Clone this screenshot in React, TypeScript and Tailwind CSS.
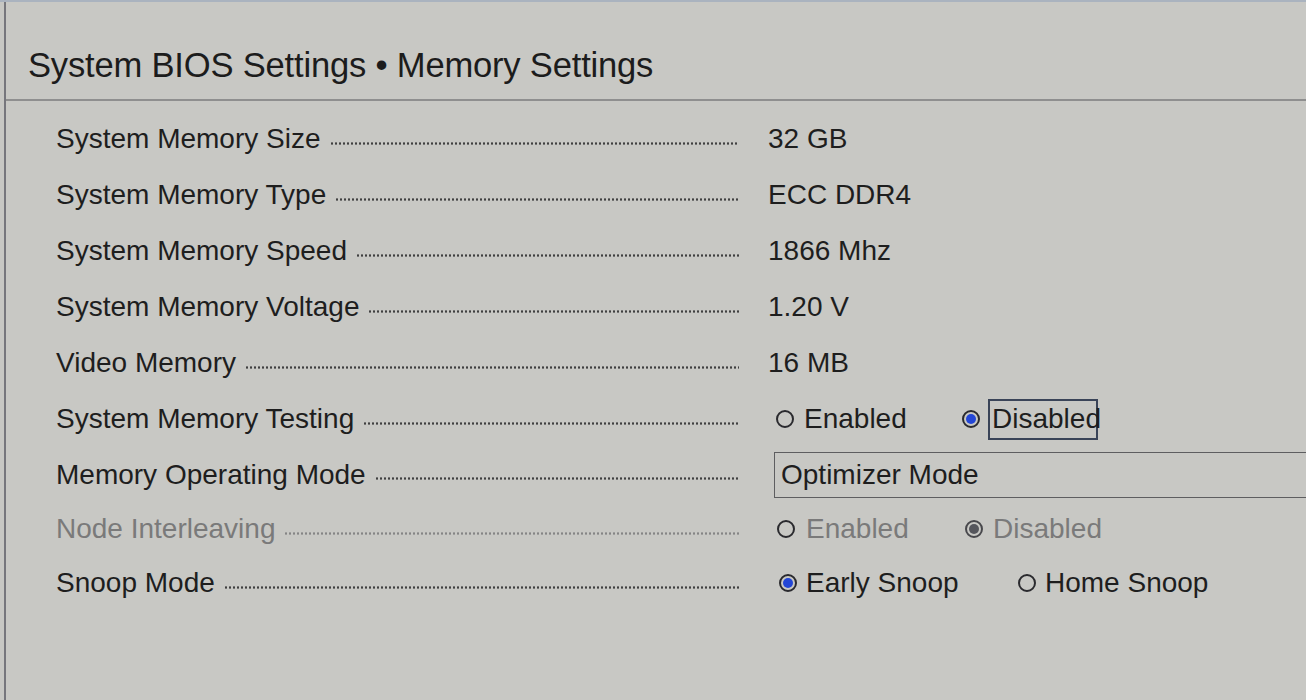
import React from "react";

const font = { fontFamily: '"Liberation Sans", Arial, sans-serif' };

function Leader({ dim }: { dim?: boolean }) {
  return (
    <div
      className={
        "flex-1 ml-[9px] mt-[8px] h-[3px] bg-[length:4px_3px] " +
        (dim
          ? "bg-[radial-gradient(circle,#858585_1px,transparent_1.3px)]"
          : "bg-[radial-gradient(circle,#404040_1px,transparent_1.3px)]")
      }
    />
  );
}

function Radio({ checked, dim }: { checked?: boolean; dim?: boolean }) {
  return (
    <span
      className={
        "shrink-0 inline-flex items-center justify-center w-[18px] h-[18px] rounded-full border-2 " +
        (dim ? "border-[#48484c]" : "border-[#2a2a2e]")
      }
    >
      {checked && (
        <span
          className={
            "w-[10px] h-[10px] rounded-full " +
            (dim ? "bg-[#55565c]" : "bg-[#2346d6]")
          }
        />
      )}
    </span>
  );
}

type Row = {
  label: string;
  dim?: boolean;
  h: string;
  value: React.ReactNode;
};

export default function App() {
  const rows: Row[] = [
    { label: "System Memory Size", h: "h-[56px]", value: <span>32 GB</span> },
    { label: "System Memory Type", h: "h-[56px]", value: <span>ECC DDR4</span> },
    { label: "System Memory Speed", h: "h-[56px]", value: <span>1866 Mhz</span> },
    { label: "System Memory Voltage", h: "h-[56px]", value: <span>1.20 V</span> },
    { label: "Video Memory", h: "h-[56px]", value: <span>16 MB</span> },
    {
      label: "System Memory Testing",
      h: "h-[56px]",
      value: (
        <div className="flex items-center pl-[8px]">
          <Radio />
          <span className="ml-[10px] w-[158px] shrink-0">Enabled</span>
          <Radio checked />
          <span className="ml-[8px] px-[2px] h-[41px] w-[110px] shrink-0 flex items-center border-2 border-[#3a4458]">
            Disabled
          </span>
        </div>
      ),
    },
    {
      label: "Memory Operating Mode",
      h: "h-[55px]",
      value: (
        <div className="ml-[6px] h-[46px] w-[560px] border border-[#5e5e60] flex items-center pl-[6px]">
          Optimizer Mode
        </div>
      ),
    },
    {
      label: "Node Interleaving",
      dim: true,
      h: "h-[54px]",
      value: (
        <div className="flex items-center pl-[9px]">
          <Radio />
          <span className="ml-[11px] w-[159px] shrink-0">Enabled</span>
          <Radio checked dim />
          <span className="ml-[10px]">Disabled</span>
        </div>
      ),
    },
    {
      label: "Snoop Mode",
      h: "h-[54px]",
      value: (
        <div className="flex items-center pl-[11px]">
          <Radio checked />
          <span className="ml-[9px] w-[212px] shrink-0">Early Snoop</span>
          <Radio />
          <span className="ml-[9px]">Home Snoop</span>
        </div>
      ),
    },
  ];

  return (
    <div
      className="w-[1306px] h-[700px] overflow-hidden bg-[#c7c7c3] border-t-2 border-[#aab3bf] pl-[4px]"
      style={font}
    >
      <div className="h-full border-l-2 border-[#76767c] bg-[#c8c8c4]">
        <div className="h-[99px] border-b-2 border-[#8f8f8f] flex items-center pl-[22px] pt-[30px] text-[34.6px] text-[#1c1c1c] tracking-[-0.2px]">
          System BIOS Settings • Memory Settings
        </div>
        <div className="pt-[10px]">
          {rows.map((r) => (
            <div
              key={r.label}
              className={
                r.h +
                " flex items-center text-[28px] " +
                (r.dim ? "text-[#7a7a7a]" : "text-[#1e1e1e]")
              }
            >
              <div className="w-[733px] shrink-0 pl-[50px] flex items-center">
                <span className="whitespace-nowrap">{r.label}</span>
                <Leader dim={r.dim} />
              </div>
              <div className="pl-[29px] flex-1 whitespace-nowrap">{r.value}</div>
            </div>
          ))}
        </div>
      </div>
    </div>
  );
}
